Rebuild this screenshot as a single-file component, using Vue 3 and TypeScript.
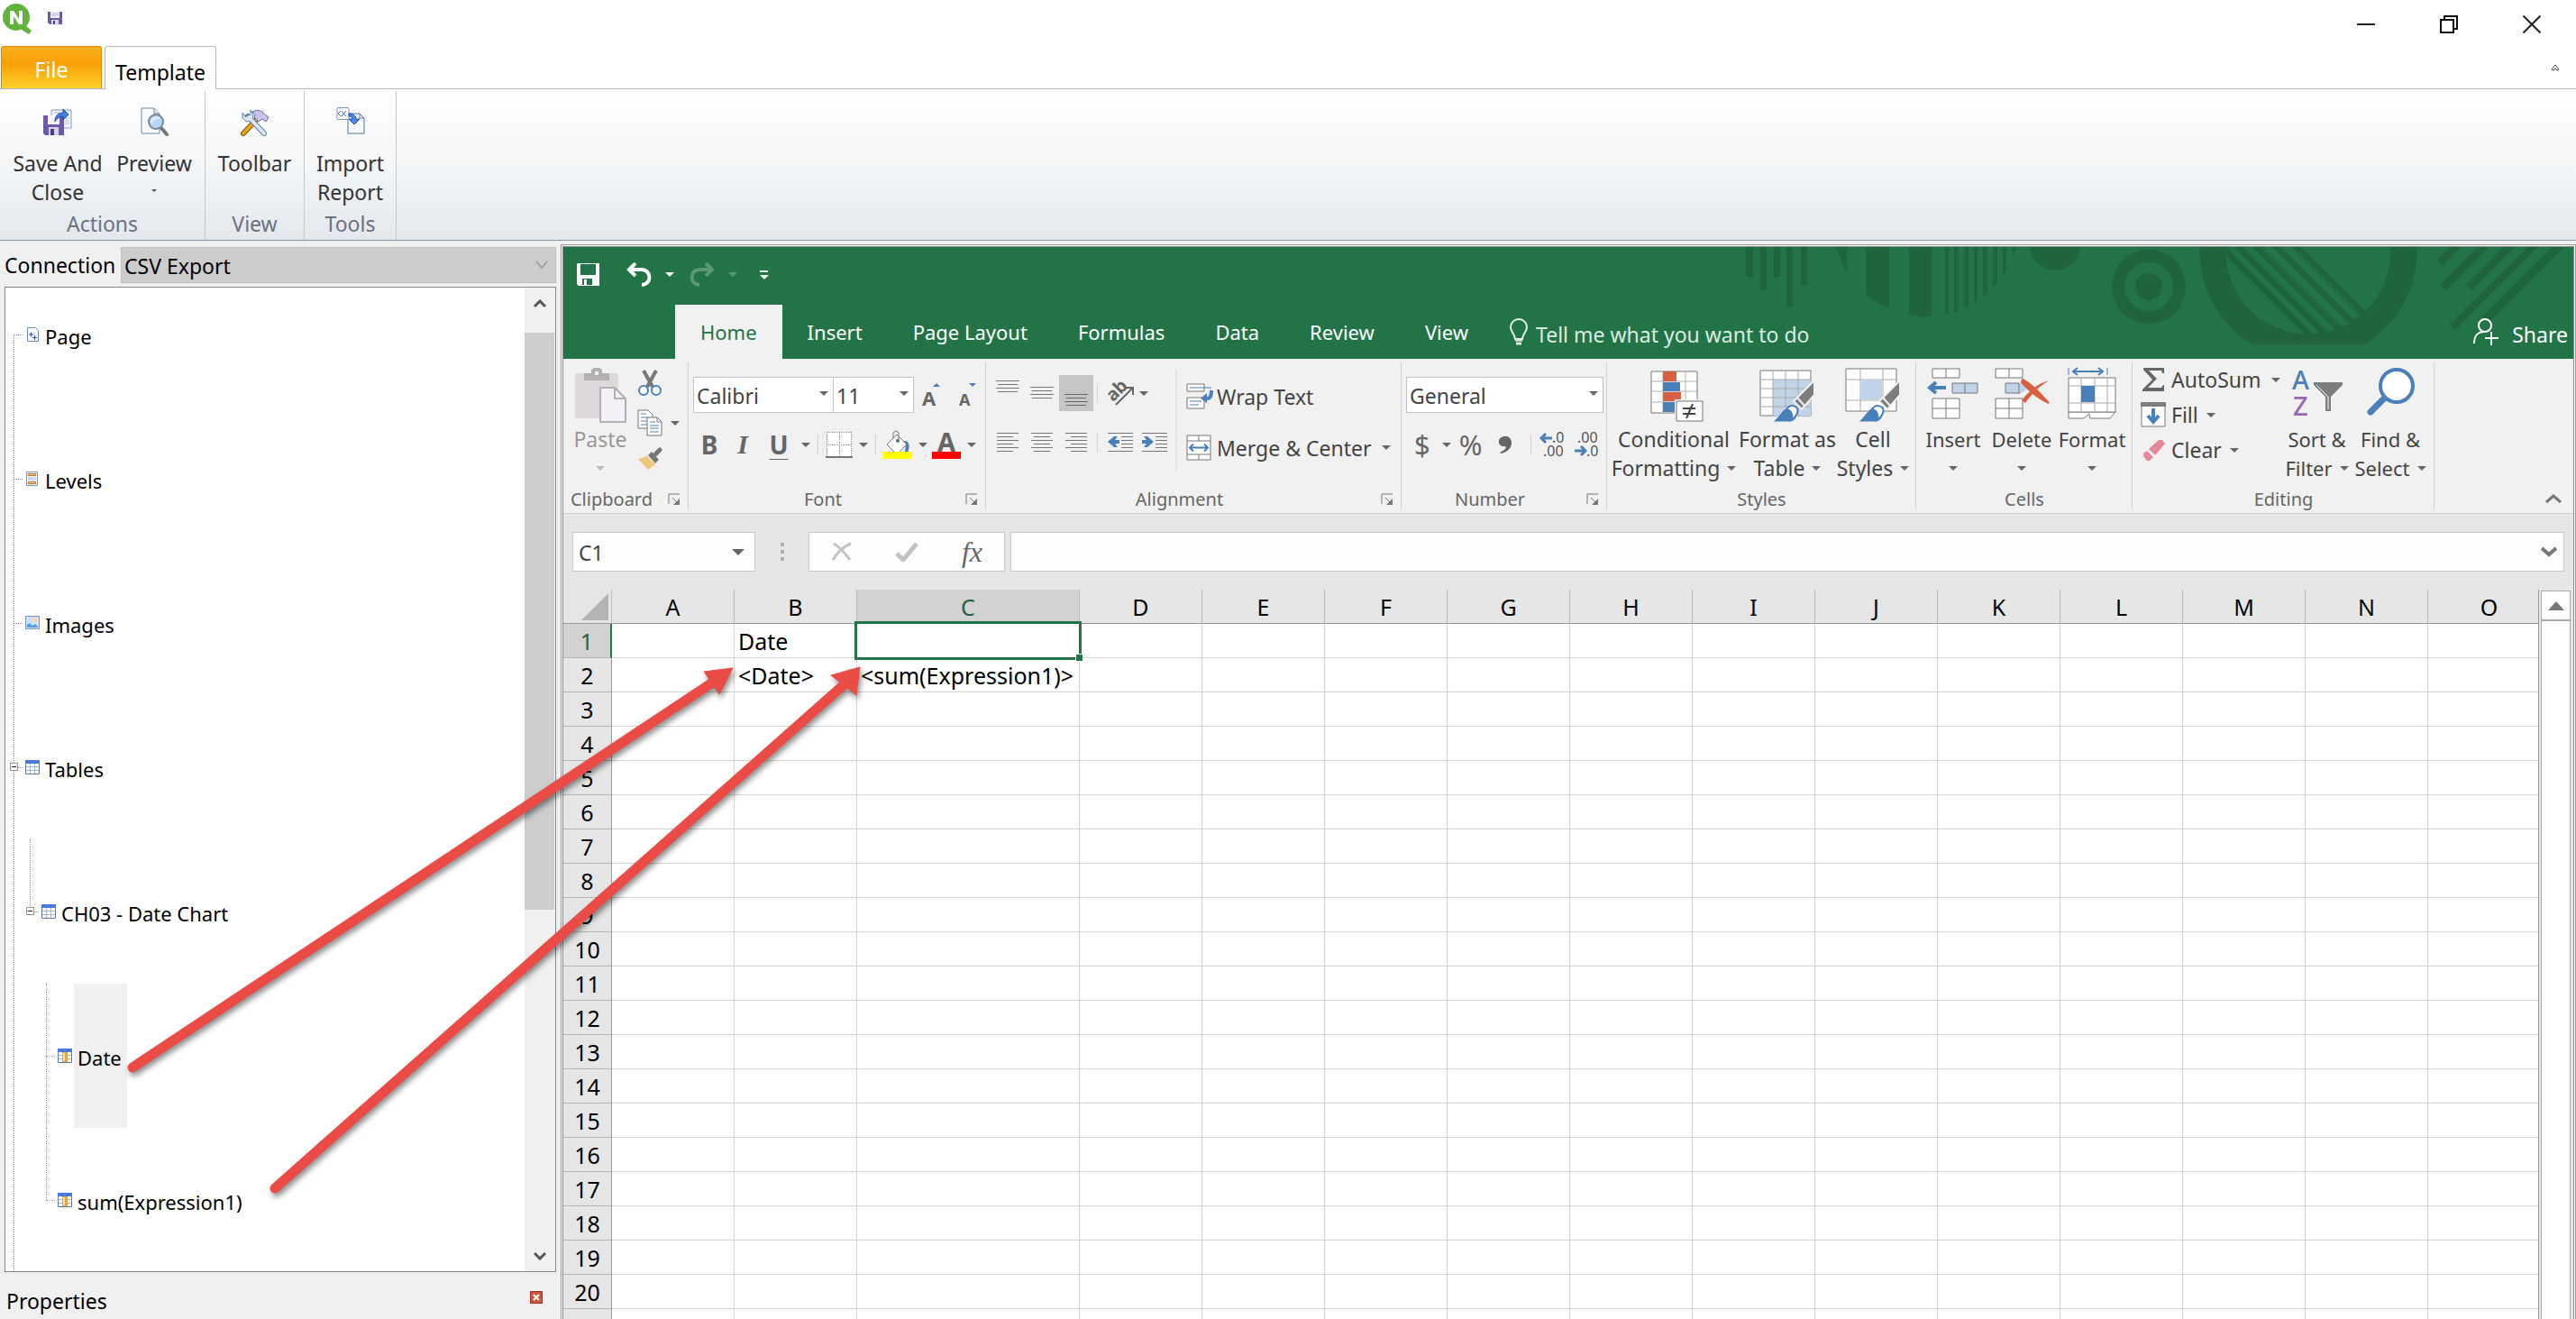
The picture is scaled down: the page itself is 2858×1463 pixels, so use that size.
<script setup lang="ts">
import { ref } from 'vue'

interface TreeNode {
  label: string
  icon: 'page' | 'levels' | 'image' | 'table' | 'column'
  depth: number
  open?: boolean
  selected?: boolean
  line?: 'full' | 'half'
}

const nodes: TreeNode[] = [
  { label: 'Page', icon: 'page', depth: 0 },
  { label: 'Levels', icon: 'levels', depth: 0 },
  { label: 'Images', icon: 'image', depth: 0 },
  { label: 'Tables', icon: 'table', depth: 0, open: true },
  { label: 'CH03 - Date Chart', icon: 'table', depth: 1, open: true, line: 'half' },
  { label: 'Date', icon: 'column', depth: 2, selected: true, line: 'full' },
  { label: 'sum(Expression1)', icon: 'column', depth: 2, line: 'half' },
]

const tabs = ['Home', 'Insert', 'Page Layout', 'Formulas', 'Data', 'Review', 'View']
const columns = 'ABCDEFGHIJKLMNO'.split('')
const rowCount = 21
const activeColumn = 'C'
const activeRow = 1

const cells: Record<string, string> = {
  B1: 'Date',
  B2: '<Date>',
  C2: '<sum(Expression1)>',
}

const formula = ref('')
</script>

<template>
  <div class="window">
    <header class="titlebar">
      <svg class="logo" width="34" height="34" viewBox="0 0 34 34" aria-hidden="true">
        <path d="M26 24l7 6-3 4-8-5z" fill="#61b33c" />
        <circle cx="16" cy="15" r="15" fill="#61b33c" />
        <path d="M9 23V8h4l6 9V8h4v15h-4l-6-9v9z" fill="#fff" />
      </svg>
      <button class="plain" aria-label="Save">
        <svg width="16" height="16" viewBox="0 0 16 16">
          <path d="M0 1h16v14H2l-2-2z" fill="#6a5aa8" />
          <path d="M3 1h10v7H3z" fill="#f4f4fb" />
          <path d="M4 3h8M4 5h8" stroke="#b8b8c8" />
          <path d="M4 10h8v5H4z" fill="#ddd9ee" />
          <path d="M6 11h2v4H6z" fill="#4b3c8c" />
        </svg>
      </button>
      <div class="window-buttons">
        <button class="plain" aria-label="Minimize">
          <svg width="20" height="20" viewBox="0 0 20 20"><path d="M0 10h20" stroke="#222" stroke-width="2" /></svg>
        </button>
        <button class="plain" aria-label="Restore">
          <svg width="20" height="20" viewBox="0 0 20 20" fill="none" stroke="#111" stroke-width="2"><path d="M1 5h14v14H1zM5 5V1h14v14h-4" /></svg>
        </button>
        <button class="plain" aria-label="Close">
          <svg width="20" height="20" viewBox="0 0 20 20"><path d="M0.500 0.500l19 19M19.500 0.500l-19 19" stroke="#222" stroke-width="2" /></svg>
        </button>
      </div>
    </header>

    <nav class="app-tabs">
      <button class="file-tab">File</button>
      <button class="template-tab">Template</button>
      <button class="plain minimize-ribbon" aria-label="Minimize ribbon">
        <svg width="10" height="8" viewBox="0 0 10 8"><path d="M1 6l4-5 4 5-2 1-2-2-2 2z" fill="#fff" stroke="#444" /></svg>
      </button>
    </nav>

    <section class="app-ribbon">
      <div class="app-group actions">
        <div class="app-buttons">
          <button class="app-button save">
            <svg width="32" height="32" viewBox="0 0 32 32">
              <path d="M9 3h22v20H9z" fill="#f3f7fd" stroke="#7f9dc6" />
              <path d="M24 12h5M24 15h5M24 18h5M12 6h6" stroke="#a9b9d3" />
              <path d="M0 9h23v22H2l-2-2z" fill="#6c5aae" />
              <path d="M5 9h13v10H5z" fill="#f6f6fc" />
              <path d="M6 22h11v9H6z" fill="#d7d2ea" />
              <path d="M8 24h4v7H8z" fill="#4c3b8f" />
              <path d="M13 16c0-7 4-10 9-10V2l6 6-6 6v-4c-4 0-6 2-9 6z" fill="#3f7fe0" stroke="#1e4fa8" />
            </svg>
            <span>Save And<br>Close</span>
          </button>
          <button class="app-button preview">
            <svg width="32" height="32" viewBox="0 0 32 32">
              <path d="M2 1h14l6 6v22H2z" fill="#fafcff" stroke="#6d88ae" />
              <path d="M16 1v6h6" fill="#dfe8f5" stroke="#6d88ae" />
              <path d="M24 23l6 7" stroke="#777" stroke-width="4" stroke-linecap="round" />
              <circle cx="18" cy="16" r="8" fill="#b9d6f5" stroke="#7c8796" stroke-width="2" />
              <path d="M13 17c0-4 4-6 9-5" fill="none" stroke="#eaf4ff" stroke-width="2" />
            </svg>
            <span>Preview<br><i class="tiny-caret"></i></span>
          </button>
        </div>
        <p>Actions</p>
      </div>
      <div class="app-group view">
        <div class="app-buttons">
          <button class="app-button wide">
            <svg width="32" height="32" viewBox="0 0 32 32">
              <path d="M3 29L19 12" stroke="#8a5a08" stroke-width="6" stroke-linecap="round" />
              <path d="M3 29L19 12" stroke="#e8a31c" stroke-width="4" stroke-linecap="round" />
              <path d="M13 5c5-3 10-1 12 1 2 2 3 3 6 5l-3 5-4-3-4 3-5-5c2-3 1-4-2-6z" fill="#c9c4ec" stroke="#6d66a8" />
              <path d="M8 10L26 29" stroke="#6080a8" stroke-width="6" stroke-linecap="round" />
              <path d="M2 6v6l5 4 6-2 1-6-3-5v5l-3 3-3-1z" fill="#dbe8f8" stroke="#6080a8" />
              <path d="M9 11L26 29" stroke="#dbe8f8" stroke-width="4" stroke-linecap="round" />
            </svg>
            <span>Toolbar<br>&nbsp;</span>
          </button>
        </div>
        <p>View</p>
      </div>
      <div class="app-group tools">
        <div class="app-buttons">
          <button class="app-button wide">
            <svg width="32" height="32" viewBox="0 0 32 32">
              <path d="M13 7h13l5 5v17H13z" fill="#f6faff" stroke="#56749f" />
              <path d="M26 7v5h5" fill="none" stroke="#56749f" />
              <rect x="1" y="0.500" width="13" height="13" rx="1" fill="#fff" stroke="#7a97c9" />
              <path d="M5 4L2 7l3 3M6 4l5 6M11 4L6 10" fill="none" stroke="#3d68c4" />
              <path d="M14 7c6 0 8 3 8 6h4l-6 6-6-6h4c0-2-1-3-4-3z" fill="#4d86e8" stroke="#2554ae" />
            </svg>
            <span>Import<br>Report</span>
          </button>
        </div>
        <p>Tools</p>
      </div>
    </section>

    <main class="workspace">
      <aside class="side">
        <div class="connection">
          <label for="connection">Connection</label>
          <div class="connection-box">
            <select id="connection"><option>CSV Export</option></select>
            <svg width="14" height="10" viewBox="0 0 14 10"><path d="M1 1l6 7 6-7" fill="none" stroke="#a5a5a5" stroke-width="2" /></svg>
          </div>
        </div>

        <div class="tree-box">
          <ul class="tree">
            <li v-for="node in nodes" :key="node.label" :class="['node', 'depth-' + node.depth]">
              <span v-if="node.line" :class="['branch', node.line]"></span>
              <span class="stub"></span>
              <button v-if="node.open" class="expander" :aria-label="'Collapse ' + node.label"></button>
              <svg width="16" height="16" viewBox="0 0 16 16" aria-hidden="true">
                <template v-if="node.icon === 'page'">
                  <path d="M2.500 0.500h9l3 3v12h-12z" fill="#fafcff" stroke="#6f8bb5" />
                  <path d="M4 8h5M6.500 5.500v5M8 11.500h5M10.500 9v5" stroke="#2e4fa8" />
                </template>
                <template v-else-if="node.icon === 'levels'">
                  <path d="M1.500 0.500h12v15h-12z" fill="#f3f7fc" stroke="#7b91b0" />
                  <path d="M3.500 2.500h8v2h-8zM3.500 11.500h8v2h-8z" fill="#fcd9a4" stroke="#c9650c" />
                  <path d="M3 7h9M3 9h9" stroke="#a8bcd6" />
                </template>
                <template v-else-if="node.icon === 'image'">
                  <path d="M0.500 0.500h15v14h-15z" fill="#c9e4fb" stroke="#7b93b8" />
                  <circle cx="10.500" cy="4.500" r="2.500" fill="#fbd3ae" />
                  <path d="M2 13V10l3-2 3 3 3-2 3 3v1z" fill="#5e97dd" />
                </template>
                <template v-else>
                  <path d="M0.500 0.500h15v15h-15z" fill="#f7faff" stroke="#60799f" />
                  <path d="M0 0h16v4H0z" fill="#4a7bd8" />
                  <path d="M5.500 4v11M10.500 4v11M1 7.500h14M1 11.500h14" stroke="#a9b8cf" />
                  <path v-if="node.icon === 'column'" d="M5 4h6v11H5z" fill="#e3a63c" />
                  <path v-if="node.icon === 'column'" d="M6 5h2v9H6z" fill="#fbe3ae" />
                </template>
              </svg>
              <span :class="['node-label', { selected: node.selected }]">{{ node.label }}</span>
            </li>
          </ul>
          <div class="tree-scroll">
            <svg width="14" height="10" viewBox="0 0 14 10"><path d="M1 8l6-6 6 6" fill="none" stroke="#555" stroke-width="3" /></svg>
            <div class="tree-thumb"></div>
            <svg width="14" height="10" viewBox="0 0 14 10"><path d="M1 2l6 6 6-6" fill="none" stroke="#555" stroke-width="3" /></svg>
          </div>
        </div>

        <div class="properties">
          <span>Properties</span>
          <button class="plain" aria-label="Close properties">
            <svg width="14" height="14" viewBox="0 0 14 14">
              <path d="M0.500 0.500h13v13h-13z" fill="#d2543f" stroke="#8f3426" />
              <path d="M4 4l6 6M10 4l-6 6" stroke="#fff" stroke-width="2" />
            </svg>
          </button>
        </div>
      </aside>

      <div class="host">
        <div class="excel">
          <div class="excel-head">
            <svg class="pattern" width="925" height="108" viewBox="0 0 925 108" aria-hidden="true">
              <defs>
                <clipPath id="disc"><circle cx="207" cy="-26" r="103" /></clipPath>
                <clipPath id="bowl"><circle cx="632" cy="5" r="93" /></clipPath>
              </defs>
              <g fill="#1f643d">
                <path d="M7 0h8v33H7zM23 0h7v48h-7zM38 0h7v33h-7zM52 0h7v66h-7zM68 0h7v42h-7z" />
                <path clip-path="url(#disc)" d="M100 0h19v90h-19zM140 0h26v90h-26zM188 0h25v90h-25zM228 0h4v90h-4zM238 0h5v90h-5zM249 0h5v90h-5zM260 0h4v90h-4zM270 0h5v90h-5zM281 0h5v90h-5zM292 0h4v90h-4zM303 0h5v90h-5z" />
                <circle cx="350" cy="-2" r="28" />
                <circle cx="454" cy="44" r="15" />
              </g>
              <g fill="none" stroke="#1f643d">
                <circle cx="454" cy="44" r="34" stroke-width="14" />
                <circle cx="631" cy="5" r="106" stroke-width="29" />
                <g clip-path="url(#bowl)" stroke-width="7">
                  <path d="M515 -20l120 120M533 -20l120 120M554 -20l120 120M576 -20l120 120M598 -20l120 120" />
                </g>
                <path d="M797 -3l-20 20M828 -3l-48 48M857 -3l-48 48M884 -4l-93 93M911 -3l-84 84" stroke-width="9" />
              </g>
            </svg>

            <div class="quick">
              <button class="plain" aria-label="Save workbook">
                <svg width="26" height="26" viewBox="0 0 26 26"><path fill-rule="evenodd" d="M1 0h24v25H2l-2-2V1zM4 1v12h17V1zM6 17v7h2v-6h3v6h6v-7z" fill="#fff" /></svg>
              </button>
              <button class="plain undo" aria-label="Undo">
                <svg width="28" height="28" viewBox="0 0 28 28"><path d="M10 1L3 8l7 7M4 8h13a8 8 0 0 1 0 17" fill="none" stroke="#fff" stroke-width="4" /></svg>
                <i class="caret light"></i>
              </button>
              <button class="plain redo" aria-label="Redo">
                <svg width="28" height="28" viewBox="0 0 28 28"><path d="M18 1l7 7-7 7M24 8H11a8 8 0 0 0 0 17" fill="none" stroke="#fff" stroke-width="4" /></svg>
                <i class="caret light"></i>
              </button>
              <button class="plain customize" aria-label="Customize toolbar"><i class="caret light"></i></button>
            </div>

            <nav class="excel-tabs">
              <button v-for="(tab, i) in tabs" :key="tab" :class="['excel-tab', { current: i === 0 }]">{{ tab }}</button>
              <button class="tell-me">
                <svg width="20" height="30" viewBox="0 0 20 30" fill="none" stroke="#e7f1eb" stroke-width="2">
                  <path d="M6 23c0-5-5-8-5-13a9 9 0 0 1 18 0c0 5-5 8-5 13z" />
                  <path d="M6 24h8M7 28h6" stroke-width="3" />
                </svg>
                <span>Tell me what you want to do</span>
              </button>
              <button class="share">
                <svg width="30" height="32" viewBox="0 0 30 32" fill="none" stroke="#fff" stroke-width="2">
                  <circle cx="13" cy="9" r="7" />
                  <path d="M1 29c0-8 4-13 11-13M13 23h15M20 16v15" />
                </svg>
                <span>Share</span>
              </button>
            </nav>
          </div>

          <div class="ribbon">
            <section class="group clipboard">
              <div class="body">
                <button class="big paste">
                  <svg width="60" height="60" viewBox="0 0 60 60">
                    <rect x="2" y="6" width="48" height="50" rx="2" fill="#dcd8dc" />
                    <path d="M12 6h8V2l3-2h6l3 2v4h8v8H12z" fill="#b3b0b3" /><path d="M24 4h4v4h-4z" fill="#f1f1f1" />
                    <path d="M30 22h16l12 12v26H30z" fill="#f5f0f7" stroke="#b3b0b3" stroke-width="2" /><path d="M46 22v12h12" fill="none" stroke="#b3b0b3" stroke-width="2" />
                  </svg>
                  <span>Paste</span><span class="drop"><i class="caret"></i></span>
                </button>
                <div class="stack">
                  <button class="plain" aria-label="Cut">
                    <svg width="28" height="30" viewBox="0 0 28 30">
                      <path d="M7 1l10 18M21 1L11 19" stroke="#777" stroke-width="4" />
                      <circle cx="7" cy="23" r="5" fill="#fff" stroke="#4a80ba" stroke-width="2" /><circle cx="21" cy="23" r="5" fill="#fff" stroke="#4a80ba" stroke-width="2" />
                    </svg>
                  </button>
                  <button class="plain" aria-label="Copy">
                    <svg width="28" height="30" viewBox="0 0 28 30">
                      <path d="M1 1h11l5 5v15H1z" fill="#fff" stroke="#777" /><path d="M4 5h6M4 9h9M4 13h9M4 17h9" stroke="#4a80ba" />
                      <path d="M11 9h11l5 5v15H11z" fill="#fff" stroke="#777" /><path d="M22 9v5h5" fill="none" stroke="#777" /><path d="M14 14h6M14 18h10M14 21h10M14 25h10" stroke="#4a80ba" />
                    </svg>
                    <i class="caret"></i>
                  </button>
                  <button class="plain" aria-label="Format painter">
                    <svg width="28" height="24" viewBox="0 0 28 24">
                      <path d="M1 11l10-3 9 9-8 6z" fill="#edc87e" /><path d="M12 7l4-4 8 9-4 4z" fill="#777" /><path d="M18 8l7-7" stroke="#777" stroke-width="5" stroke-linecap="round" />
                    </svg>
                  </button>
                </div>
              </div>
              <footer><span>Clipboard</span><svg class="launcher" width="14" height="14" viewBox="0 0 14 14"><path d="M1 12V1h12M5 5l6 6" fill="none" stroke="#777" /><path d="M13 6v7H6z" fill="#777" /></svg></footer>
            </section>

            <section class="group font">
              <div class="body rows">
                <div class="row">
                  <div class="picker face"><select aria-label="Font"><option>Calibri</option></select><i class="caret"></i></div>
                  <div class="picker size"><select aria-label="Font size"><option>11</option></select><i class="caret"></i></div>
                  <button class="plain grow" aria-label="Increase font size">
                    <svg width="22" height="28" viewBox="0 0 22 28"><text x="0" y="26" class="bold" font-size="22" fill="#666">A</text><path d="M12 5l4-4 4 4z" fill="#4a80ba" /></svg>
                  </button>
                  <button class="plain shrink" aria-label="Decrease font size">
                    <svg width="22" height="28" viewBox="0 0 22 28"><text x="1" y="26" class="bold" font-size="18" fill="#666">A</text><path d="M12 1h8l-4 4z" fill="#4a80ba" /></svg>
                  </button>
                </div>
                <div class="row second">
                  <button class="plain letter">B</button>
                  <button class="plain letter italic">I</button>
                  <button class="plain letter underline">U</button>
                  <i class="caret"></i>
                  <i class="bar"></i>
                  <button class="plain" aria-label="Borders">
                    <svg width="30" height="30" viewBox="0 0 30 30"><path d="M1 1h28v28H1z" fill="#fff" /><path d="M1 1.500h28M1 15.500h28M1.500 1v28M15.500 1v28M28.500 1v28" stroke="#888" stroke-dasharray="1 1" /><path d="M0 29h30" stroke="#777" stroke-width="2" /></svg>
                  </button>
                  <i class="caret"></i>
                  <i class="bar"></i>
                  <button class="plain" aria-label="Fill color">
                    <svg width="32" height="32" viewBox="0 0 32 32"><path d="M23 12c6 0 7 6 4 13l-4 1c2-5 2-8 0-14z" fill="#4a80ba" /><path d="M4 16L15 5l11 11-11 11z" fill="#fff" stroke="#777" /><path d="M11 9V3l3-2 3 2v8" fill="none" stroke="#777" /><circle cx="16" cy="12" r="2" fill="#666" /><path d="M0 24h32v8H0z" fill="#ff0" /></svg>
                  </button>
                  <i class="caret"></i>
                  <button class="plain font-color" aria-label="Font color">
                    <svg width="32" height="32" viewBox="0 0 32 32"><text x="6" y="24" class="bold" font-size="29" fill="#666">A</text><path d="M0 24h32v8H0z" fill="#f00" /></svg>
                  </button>
                  <i class="caret"></i>
                </div>
              </div>
              <footer><span>Font</span><svg class="launcher" width="14" height="14" viewBox="0 0 14 14"><path d="M1 12V1h12M5 5l6 6" fill="none" stroke="#777" /><path d="M13 6v7H6z" fill="#777" /></svg></footer>
            </section>

            <section class="group alignment">
              <div class="body">
                <div class="align-grid">
                  <div class="row">
                    <button class="plain square" aria-label="Top align"><svg width="28" height="38" viewBox="0 0 28 38" stroke="#777"><path d="M1 5.500h26M3 9.500h22M1 13.500h26M3 17.500h22" /></svg></button>
                    <button class="plain square" aria-label="Middle align"><svg width="28" height="38" viewBox="0 0 28 38" stroke="#777"><path d="M1 12.500h26M3 16.500h22M1 20.500h26M3 24.500h22" /></svg></button>
                    <button class="plain square pressed" aria-label="Bottom align"><svg width="28" height="38" viewBox="0 0 28 38" stroke="#666"><path d="M1 20.500h26M3 24.500h22M1 28.500h26M3 32.500h22" /></svg></button>
                    <i class="bar"></i>
                    <button class="plain orient" aria-label="Orientation">
                      <svg width="30" height="30" viewBox="0 0 30 30"><text x="2" y="22" class="bold" font-size="20" fill="#666" transform="rotate(-45 8 19)">ab</text><path d="M9 28L27 10M20 9h8v8" fill="none" stroke="#666" stroke-width="2" /></svg>
                      <i class="caret"></i>
                    </button>
                  </div>
                  <div class="row second">
                    <button class="plain square" aria-label="Align left"><svg width="28" height="24" viewBox="0 0 28 24" stroke="#777"><path d="M2 1.500h24M2 5.500h18M2 9.500h24M2 13.500h18M2 17.500h24M2 21.500h18" /></svg></button>
                    <button class="plain square" aria-label="Center"><svg width="28" height="24" viewBox="0 0 28 24" stroke="#777"><path d="M2 1.500h24M5 5.500h18M2 9.500h24M5 13.500h18M2 17.500h24M5 21.500h18" /></svg></button>
                    <button class="plain square" aria-label="Align right"><svg width="28" height="24" viewBox="0 0 28 24" stroke="#777"><path d="M2 1.500h24M8 5.500h18M2 9.500h24M8 13.500h18M2 17.500h24M8 21.500h18" /></svg></button>
                    <i class="bar"></i>
                    <button class="plain square indent" aria-label="Decrease indent"><svg width="28" height="24" viewBox="0 0 28 24"><path d="M0 1.500h28M15 5.500h13M15 9.500h13M15 13.500h13M15 17.500h13M0 21.500h28" stroke="#777" /><path d="M0 11l7-6h4l-3 4h5v4H8l3 4H7z" fill="#4a80ba" /></svg></button>
                    <button class="plain square" aria-label="Increase indent"><svg width="28" height="24" viewBox="0 0 28 24"><path d="M0 1.500h28M15 5.500h13M15 9.500h13M15 13.500h13M15 17.500h13M0 21.500h28" stroke="#777" /><path d="M13 11L6 5H2l3 4H0v4h5l-3 4h4z" fill="#4a80ba" /></svg></button>
                  </div>
                </div>
                <div class="wrap-list">
                  <button class="plain">
                    <svg width="30" height="30" viewBox="0 0 30 30"><path d="M1 2h19v8H1zM1 17h19v12H1z" fill="#fff" stroke="#777" /><path d="M4 6h24M4 21h13M4 25h10" stroke="#4a80ba" /><path d="M26 9h4c0 8-2 11-7 11v3l-7-5 7-6v4c2 0 3-2 3-7z" fill="#4a80ba" /></svg>
                    <span>Wrap Text</span>
                  </button>
                  <button class="plain">
                    <svg width="30" height="30" viewBox="0 0 30 30"><path d="M1 2h26v27H1z" fill="#fff" stroke="#777" /><path d="M1 8h26M1 23h26M14 2v6M14 23v6" stroke="#777" /><path d="M4 15.500h20M8 11.500l-4 4 4 4M20 11.500l4 4-4 4" fill="none" stroke="#4a80ba" stroke-width="2" /></svg>
                    <span>Merge &amp; Center</span>
                    <i class="caret"></i>
                  </button>
                </div>
              </div>
              <footer><span>Alignment</span><svg class="launcher" width="14" height="14" viewBox="0 0 14 14"><path d="M1 12V1h12M5 5l6 6" fill="none" stroke="#777" /><path d="M13 6v7H6z" fill="#777" /></svg></footer>
            </section>

            <section class="group number">
              <div class="body rows">
                <div class="row">
                  <div class="picker format"><select aria-label="Number format"><option>General</option></select><i class="caret"></i></div>
                </div>
                <div class="row second">
                  <button class="plain symbol dollar">$</button>
                  <i class="caret"></i>
                  <button class="plain symbol percent">%</button>
                  <button class="plain" aria-label="Comma style"><svg width="28" height="30" viewBox="0 0 28 30"><path d="M13 7c5-3 11 0 11 6 0 7-6 11-12 12l-1-1c4-2 7-4 7-7-5 1-9-2-8-6 0-2 1-3 3-4z" fill="#666" /></svg></button>
                  <i class="bar"></i>
                  <button class="plain decimals" aria-label="Increase decimal"><svg width="28" height="30" viewBox="0 0 28 30"><text x="13" y="13" font-size="16" fill="#555">.0</text><text x="3" y="28" font-size="16" fill="#555">.00</text><path d="M1 8h12M6 3L1 8l5 5" fill="none" stroke="#4a80ba" stroke-width="3" /></svg></button>
                  <button class="plain decimals" aria-label="Decrease decimal"><svg width="28" height="30" viewBox="0 0 28 30"><text x="3" y="13" font-size="16" fill="#555">.00</text><text x="13" y="28" font-size="16" fill="#555">.0</text><path d="M0 22h12M7 17l5 5-5 5" fill="none" stroke="#4a80ba" stroke-width="3" /></svg></button>
                </div>
              </div>
              <footer><span>Number</span><svg class="launcher" width="14" height="14" viewBox="0 0 14 14"><path d="M1 12V1h12M5 5l6 6" fill="none" stroke="#777" /><path d="M13 6v7H6z" fill="#777" /></svg></footer>
            </section>

            <section class="group styles">
              <div class="body">
                <button class="big conditional">
                  <svg width="60" height="60" viewBox="0 0 60 60">
                    <path d="M2 4h51v46H2z" fill="#fff" stroke="#777" /><path d="M2 15h51M2 26h51M2 38h51M15 4v46M28 4v46M40 4v46" stroke="#b0b0b0" />
                    <path d="M15 4h15v11H15zM15 27h20v10H15z" fill="#d95f41" /><path d="M15 16h19v10H15zM15 38h13v11H15z" fill="#4a80ba" />
                    <path d="M28 35h32v25H28z" fill="#f1f1f1" /><path d="M30 37h29v22H30z" fill="#fff" stroke="#777" /><path d="M37 45h14M37 51h14M48 40l-7 16" stroke="#444" stroke-width="2" />
                  </svg>
                  <span>Conditional</span><span class="drop">Formatting <i class="caret"></i></span>
                </button>
                <button class="big as-table">
                  <svg width="62" height="60" viewBox="0 0 62 60">
                    <path d="M1 3h56v50H1z" fill="#fff" stroke="#777" /><path d="M15 13h42v40H15z" fill="#c1d3e8" /><path d="M1 13h56M1 23h56M1 33h56M1 43h56M15 3v50M29 3v50M43 3v50" stroke="#aaa" />
                    <path d="M61 14v16L47 46l-9-9z" fill="#7d7d7d" stroke="#f1f1f1" stroke-width="2" /><path d="M42 33l8 9" stroke="#f1f1f1" stroke-width="2" />
                    <path d="M15 60c8-7 11-17 20-17 9 1 10 15-1 17z" fill="#4a80ba" stroke="#f1f1f1" /><path d="M30 46c4-6 10-4 12-1 2 5-3 11-7 13 3-6 0-11-5-12z" fill="#fff" stroke="#4a80ba" stroke-width="2" />
                  </svg>
                  <span>Format as</span><span class="drop">Table <i class="caret"></i></span>
                </button>
                <button class="big cell-styles">
                  <svg width="62" height="60" viewBox="0 0 62 60">
                    <path d="M1 1h56v47H1z" fill="#fff" stroke="#777" /><path d="M1 13h56M1 36h56M17 1v47M42 1v47" stroke="#aaa" /><path d="M17 14h24v21H17z" fill="#c1d3e8" />
                    <path d="M61 14v16L47 46l-9-9z" fill="#7d7d7d" stroke="#f1f1f1" stroke-width="2" /><path d="M42 33l8 9" stroke="#f1f1f1" stroke-width="2" />
                    <path d="M15 60c8-7 11-17 20-17 9 1 10 15-1 17z" fill="#4a80ba" stroke="#f1f1f1" /><path d="M30 46c4-6 10-4 12-1 2 5-3 11-7 13 3-6 0-11-5-12z" fill="#fff" stroke="#4a80ba" stroke-width="2" />
                  </svg>
                  <span>Cell</span><span class="drop">Styles <i class="caret"></i></span>
                </button>
              </div>
              <footer><span>Styles</span></footer>
            </section>

            <section class="group cells">
              <div class="body">
                <button class="big insert">
                  <svg width="58" height="60" viewBox="0 0 58 60">
                    <path d="M6 1h30v10H6zM6 34h30v22H6z" fill="#fff" stroke="#777" /><path d="M21 1v10M21 34v22M6 45h30" stroke="#777" /><path d="M28 17h28v11H28z" fill="#c1d3e8" stroke="#777" /><path d="M42 17v11" stroke="#777" /><path d="M3 22h18M10 16l-7 6 7 6" fill="none" stroke="#4a80ba" stroke-width="4" />
                  </svg>
                  <span>Insert</span><span class="drop"><i class="caret"></i></span>
                </button>
                <button class="big delete">
                  <svg width="62" height="60" viewBox="0 0 62 60">
                    <path d="M2 1h30v10H2zM2 34h30v22H2z" fill="#fff" stroke="#777" /><path d="M17 1v10M17 34v22M2 45h30" stroke="#777" /><path d="M13 17h18l8 5-8 6H13z" fill="#c1d3e8" /><path d="M28 17H13v11h16M28 17v11" fill="none" stroke="#777" /><path d="M32 13c10 5 18 14 29 26C50 34 40 26 31 16z" fill="#d95f41" stroke="#d95f41" stroke-width="2" /><path d="M61 14C48 18 40 25 31 36l4 3c8-11 15-18 26-25z" fill="#d95f41" />
                  </svg>
                  <span>Delete</span><span class="drop"><i class="caret"></i></span>
                </button>
                <button class="big format-cells">
                  <svg width="56" height="60" viewBox="0 0 56 60">
                    <path d="M2 49h52l-6 7H26l-1-5-6 5H2z" fill="#fff" stroke="#777" /><path d="M2 11h52v38H2z" fill="#fff" stroke="#777" /><path d="M2 20h52M2 39h52M16 11v38M31 11v38M45 11v38" stroke="#aaa" /><path d="M16 20h15v18H16z" fill="#4a80ba" /><path d="M2 0v8M45 0v8" stroke="#4a80ba" /><path d="M7 4h33M12 0L7 4l5 4M35 0l5 4-5 4" fill="none" stroke="#4a80ba" stroke-width="2" />
                  </svg>
                  <span>Format</span><span class="drop"><i class="caret"></i></span>
                </button>
              </div>
              <footer><span>Cells</span></footer>
            </section>

            <section class="group editing">
              <div class="body">
                <div class="edit-list">
                  <button class="plain autosum">
                    <svg width="28" height="28" viewBox="0 0 28 28"><path d="M3 1h23v6h-2l-1-3H9l9 9L8 23h15l2-3h1v7H2v-2l11-11L3 3z" fill="#666" /></svg>
                    <span>AutoSum</span><i class="caret"></i>
                  </button>
                  <button class="plain">
                    <svg width="28" height="28" viewBox="0 0 28 28"><path d="M1 1h26v26H1z" fill="#fff" stroke="#777" /><path d="M0 0h28v5H0z" fill="#7d7d7d" /><path d="M14 7v14M8 15l6 7 6-7" fill="none" stroke="#4a80ba" stroke-width="4" /></svg>
                    <span>Fill</span><i class="caret"></i>
                  </button>
                  <button class="plain">
                    <svg width="28" height="28" viewBox="0 0 28 28"><path d="M9 13L20 3h4l3 4-11 13z" fill="#e6879b" /><path d="M7 15l7 7-4 4h-3l-4-5v-3z" fill="#e6879b" /></svg>
                    <span>Clear</span><i class="caret"></i>
                  </button>
                </div>
                <button class="big sort">
                  <svg width="58" height="60" viewBox="0 0 58 60"><text x="1" y="24" class="medium" font-size="29" fill="#4a80ba">A</text><text x="2" y="53" class="medium" font-size="29" fill="#9a68b8">Z</text><path d="M25 16h32v3L44 32v16h-6V32L25 19z" fill="#7d7d7d" /><path d="M28 19l13 13v14" fill="none" stroke="#fff" /></svg>
                  <span>Sort &amp;</span><span class="drop">Filter <i class="caret"></i></span>
                </button>
                <button class="big find">
                  <svg width="58" height="60" viewBox="0 0 58 60"><path d="M23 33L7 49" stroke="#4a80ba" stroke-width="7" stroke-linecap="round" /><circle cx="36" cy="20" r="18" fill="#fff" stroke="#4a80ba" stroke-width="4" /></svg>
                  <span>Find &amp;</span><span class="drop">Select <i class="caret"></i></span>
                </button>
              </div>
              <footer><span>Editing</span></footer>
            </section>
            <button class="plain collapse" aria-label="Collapse ribbon">
              <svg width="18" height="12" viewBox="0 0 18 12"><path d="M1 10l8-7 8 7" fill="none" stroke="#777" stroke-width="3" /></svg>
            </button>
          </div>

          <div class="formula-bar">
            <div class="name-box">
              <input aria-label="Name box" value="C1">
              <i class="caret large"></i>
            </div>
            <div class="grip"><i></i><i></i><i></i></div>
            <div class="formula-tools">
              <button class="plain" aria-label="Cancel"><svg width="24" height="22" viewBox="0 0 24 22"><path d="M3 2c6 3 12 10 18 18M22 2C14 5 7 12 2 20" fill="none" stroke="#c3c3c3" stroke-width="3" /></svg></button>
              <button class="plain" aria-label="Enter"><svg width="26" height="22" viewBox="0 0 26 22"><path d="M2 13l7 7L24 2" fill="none" stroke="#c3c3c3" stroke-width="5" /></svg></button>
              <button class="plain fx">fx</button>
            </div>
            <div class="formula-field">
              <input v-model="formula" aria-label="Formula">
              <svg width="18" height="12" viewBox="0 0 18 12"><path d="M1 2l8 7 8-7" fill="none" stroke="#777" stroke-width="4" /></svg>
            </div>
          </div>

          <div class="sheet-area">
            <div class="sheet">
              <table>
                <colgroup>
                  <col class="row-head-col">
                  <col v-for="c in columns" :key="c" :class="c === 'C' ? 'wide-col' : 'col'">
                </colgroup>
                <thead>
                  <tr>
                    <td class="corner"><svg width="30" height="30" viewBox="0 0 30 30"><path d="M30 0v30H0z" fill="#b4b4b4" /></svg></td>
                    <th v-for="c in columns" :key="c" scope="col" :class="{ active: c === activeColumn }">{{ c }}</th>
                  </tr>
                </thead>
                <tbody>
                  <tr v-for="r in rowCount" :key="r">
                    <th scope="row" :class="{ active: r === activeRow }">{{ r }}</th>
                    <td v-for="c in columns" :key="c">
                      {{ cells[c + r] }}
                      <div v-if="c === activeColumn && r === activeRow" class="selection"><i></i></div>
                    </td>
                  </tr>
                </tbody>
              </table>
            </div>
            <div class="sheet-scroll">
              <button class="scroll-up" aria-label="Scroll up"><svg width="18" height="10" viewBox="0 0 18 10"><path d="M9 0l9 10H0z" fill="#777" /></svg></button>
              <div class="sheet-thumb"></div>
            </div>
          </div>
        </div>
      </div>
    </main>

    <svg class="arrows" aria-hidden="true">
      <g fill="#ea4b44" stroke="#ea4b44">
        <path d="M147 1184L792 756M305 1318L939 757" stroke-width="11" stroke-linecap="round" />
        <path d="M813 741l-32 4 17 25zM954 740l-32 9 28 22z" />
      </g>
    </svg>
  </div>
</template>

<style>
html,
body {
  margin: 0;
  background: #fff;
}
</style>

<style scoped>
.window {
  position: relative;
  display: flex;
  flex-direction: column;
  height: 100vh;
  overflow: hidden;
  font: 23px/32px "Noto Sans", "Open Sans", sans-serif;
  color: #000;
  background: #fff;
}
*,
*::before,
*::after {
  box-sizing: border-box;
}
button,
select,
input {
  font: inherit;
  color: inherit;
  margin: 0;
}
button {
  padding: 0;
  border: 0;
  background: none;
  white-space: nowrap;
}
svg {
  display: block;
  flex: none;
}
.group svg {
  overflow: visible;
}
.plain {
  display: flex;
  align-items: center;
}
.bold {
  font-weight: 700;
}
.medium {
  font-weight: 500;
}

/* Title bar and application ribbon */
.titlebar {
  display: flex;
  align-items: flex-start;
  height: 51px;
  padding: 4px 22px 0 2px;
}
.titlebar > .plain {
  margin: 8px 0 0 17px;
}
.window-buttons {
  display: flex;
  gap: 72px;
  margin: 13px 17px 0 auto;
}
.app-tabs {
  display: flex;
  align-items: stretch;
  height: 48px;
  padding-left: 1px;
  border-bottom: 1px solid #b6b8c2;
}
.file-tab {
  width: 112px;
  padding-top: 3px;
  color: #fff;
  border: 1px solid #d9861b;
  border-bottom: 0;
  border-radius: 3px 3px 0 0;
  background: linear-gradient(#fbb01f, #fb9f06 40%, #fdd22c);
}
.template-tab {
  width: 124px;
  height: 48px;
  margin-left: 3px;
  padding-top: 9px;
  border: 1px solid #b6b8c2;
  border-bottom: 0;
  border-radius: 3px 3px 0 0;
  background: #fff;
}
.minimize-ribbon {
  margin: 0 18px 0 auto;
}
.app-ribbon {
  display: flex;
  flex: none;
  height: 168px;
  padding-top: 2px;
  border-bottom: 1px solid #8a929c;
  background: linear-gradient(#fff, #f4f6f8 50%, #e4e8ed);
}
.app-group {
  display: flex;
  flex-direction: column;
  padding-top: 18px;
  border-right: 1px solid #c3c8ce;
}
.actions {
  width: 228px;
}
.actions .app-buttons {
  padding-left: 6px;
}
.view {
  width: 110px;
}
.tools {
  width: 102px;
}
.app-buttons {
  display: flex;
  height: 113px;
}
.app-button {
  display: flex;
  flex-direction: column;
  align-items: center;
  gap: 14px;
  color: #333;
}
.save {
  width: 116px;
}
.preview {
  width: 98px;
}
.wide {
  width: 100%;
}
.app-group p {
  margin: 0;
  text-align: center;
  color: #6b7280;
}
.tiny-caret {
  display: block;
  width: 6px;
  margin: 13px auto 0;
  border: 3px solid transparent;
  border-top-color: #555;
  border-bottom: 0;
}

/* Side panel */
.workspace {
  display: flex;
  flex: 1;
  min-height: 0;
  padding-top: 4px;
  background: #f0f0f0;
}
.side {
  display: flex;
  flex-direction: column;
  flex: none;
  width: 622px;
  padding: 3px 5px 0;
}
.connection {
  display: flex;
  align-items: center;
  justify-content: space-between;
  height: 40px;
  margin-bottom: 4px;
}
.connection-box {
  position: relative;
  width: 483px;
}
.connection-box select {
  display: block;
  width: 100%;
  height: 40px;
  padding: 2px 3px 0;
  border: 1px solid #bdbdbd;
  border-radius: 0;
  background: #ccc;
  appearance: none;
}
.connection-box svg {
  position: absolute;
  right: 9px;
  top: 15px;
}
.tree-box {
  display: flex;
  flex: 1;
  min-height: 0;
  overflow: hidden;
  border: 1px solid #828790;
  background: #fff;
}
.tree {
  position: relative;
  flex: 1;
  margin: -28px 0 0;
  padding: 0;
  list-style: none;
  font-size: 22px;
}
.tree::before {
  content: "";
  position: absolute;
  left: 9px;
  top: 80px;
  bottom: 0;
  border-left: 1px dotted #999;
}
.node {
  position: relative;
  display: flex;
  align-items: center;
  height: 160px;
  padding-left: 9px;
}
.depth-1 {
  margin-left: 18px;
}
.depth-2 {
  margin-left: 36px;
}
.branch {
  position: absolute;
  left: 9px;
  top: 0;
  border-left: 1px dotted #999;
}
.branch.full {
  height: 160px;
}
.branch.half {
  height: 80px;
}
.stub {
  width: 10px;
  margin-right: 3px;
  border-top: 1px dotted #999;
}
.expander {
  position: absolute;
  left: 5px;
  top: 75px;
  width: 9px;
  height: 9px;
  border: 1px solid #999;
  background: linear-gradient(#222, #222) center / 5px 1px no-repeat #fff;
}
.node-label {
  display: flex;
  align-items: center;
  height: 160px;
  margin-left: 2px;
  padding: 3px 6px 0 4px;
}
.node-label.selected {
  background: #f0f0f0;
}
.tree-scroll {
  display: flex;
  flex-direction: column;
  align-items: center;
  width: 34px;
  padding: 13px 1px 12px 0;
  background: #f0f0f0;
}
.tree-thumb {
  width: 33px;
  height: 60%;
  margin: 27px 0 auto;
  background: #cdcdcd;
}
.properties {
  display: flex;
  justify-content: space-between;
  align-items: flex-start;
  height: 52px;
  padding: 16px 15px 0 2px;
}
.properties .plain {
  margin-top: 5px;
}

/* Spreadsheet frame and green header */
.host {
  display: flex;
  flex: 1;
  min-width: 0;
  padding: 1px 1px 0;
  border: 1px solid #999;
  border-bottom: 0;
  background: #fff;
}
.excel {
  display: flex;
  flex-direction: column;
  flex: 1;
  min-width: 0;
  border: 1px solid #8c8c8c;
  border-bottom: 0;
  background: #e6e6e6;
}
.excel-head {
  position: relative;
  flex: none;
  height: 124px;
  color: #fff;
  background: #227447;
}
.pattern {
  position: absolute;
  right: 0;
  top: 0;
}
.quick {
  display: flex;
  align-items: center;
  height: 64px;
  padding: 0 15px 3px;
}
.undo,
.redo {
  gap: 15px;
}
.undo {
  margin-left: 29px;
}
.redo {
  margin-left: 17px;
  opacity: 0.25;
}
.customize {
  width: 9px;
  height: 10px;
  margin-left: 25px;
  border-top: 2px solid #fff;
  align-items: flex-end;
}
.caret {
  flex: none;
  display: inline-block;
  width: 10px;
  border: 5px solid transparent;
  border-top-color: #666;
  border-bottom: 0;
}
.caret.light {
  border-top-color: #fff;
}
.caret.large {
  width: 14px;
  border-width: 7px 7px 0;
}
.excel-tabs {
  position: relative;
  display: flex;
  height: 60px;
  padding-left: 124px;
}
.excel-tab {
  padding: 0 28px;
  font-size: 22px;
}
.excel-tab.current {
  color: #227447;
  background: #f1f1f1;
}
.tell-me,
.share {
  display: flex;
  align-items: center;
}
.tell-me span,
.share span {
  padding-top: 5px;
}
.tell-me {
  gap: 9px;
  margin-left: 18px;
  color: #dcebe2;
}
.share {
  gap: 13px;
  margin: 0 6px 0 auto;
}

/* Spreadsheet ribbon */
.ribbon {
  display: flex;
  flex: none;
  height: 172px;
  color: #444;
  border-bottom: 1px solid #d2d2d2;
  background: #f1f1f1;
}
.group {
  position: relative;
  display: flex;
  flex-direction: column;
  flex: none;
}
.group::after {
  content: "";
  position: absolute;
  right: 0;
  top: 4px;
  bottom: 4px;
  width: 1px;
  background: #d2d2d2;
}
.clipboard { width: 139px; }
.font { width: 330px; }
.alignment { width: 461px; }
.number { width: 228px; }
.styles { width: 343px; }
.cells { width: 240px; }
.editing { width: 335px; }
.body {
  display: flex;
  align-items: flex-start;
  height: 143px;
}
.group footer {
  position: relative;
  height: 26px;
  font-size: 20px;
  line-height: 26px;
  text-align: center;
  color: #666;
}
.clipboard footer,
.font footer,
.alignment footer,
.number footer {
  padding-right: 32px;
}
.launcher {
  position: absolute;
  right: 9px;
  top: 6px;
}
.big {
  display: flex;
  flex-direction: column;
  align-items: center;
  padding-top: 10px;
}
.big svg {
  margin-bottom: 3px;
}
.drop {
  display: flex;
  align-items: center;
  justify-content: center;
  gap: 8px;
  height: 32px;
}
.paste {
  width: 74px;
  margin-left: 4px;
  color: #999;
}
.paste .caret {
  border-top-color: #bbb;
}
.stack {
  display: flex;
  flex-direction: column;
  gap: 14px;
  padding: 12px 0 0 4px;
}
.stack .plain {
  gap: 9px;
}
.rows {
  flex-direction: column;
  padding: 20px 5px 0;
}
.row {
  display: flex;
  align-items: center;
  height: 40px;
}
.row.second {
  height: 34px;
  margin-top: 18px;
}
.picker {
  position: relative;
}
.picker select {
  display: block;
  width: 100%;
  height: 40px;
  padding: 2px 3px 0;
  border: 1px solid #c3c3c3;
  border-radius: 0;
  background: #fff;
  appearance: none;
}
.picker .caret {
  position: absolute;
  right: 6px;
  top: 16px;
}
.face { width: 156px; }
.size { width: 90px; margin-left: -1px; }
.format { width: 219px; }
.grow {
  margin-left: 9px;
}
.shrink {
  margin-left: 18px;
}
.font .second {
  padding-left: 3px;
}
.letter {
  justify-content: center;
  width: 36px;
  font-size: 28px;
  font-weight: 700;
  color: #666;
}
.letter:first-child {
  width: 30px;
}
.italic {
  width: 44px;
  font-family: "Liberation Serif", serif;
  font-style: italic;
  font-size: 30px;
}
.underline {
  text-decoration: underline;
  text-decoration-thickness: 1px;
  text-underline-offset: 5px;
}
.font .second .caret {
  margin-left: 7px;
}
.bar {
  flex: none;
  width: 1px;
  height: 22px;
  background: #d2d2d2;
}
.font .second .bar {
  margin: 0 8px;
}
.font-color {
  margin-left: 5px;
}
.align-grid {
  width: 212px;
  height: 112px;
  padding: 6px 0 0 5px;
  margin-top: 12px;
  border-right: 2px solid #e3e3e3;
}
.square {
  justify-content: center;
  width: 38px;
  height: 40px;
}
.pressed {
  background: #c5c5c5;
}
.align-grid .bar {
  margin: 0 11px 0 4px;
}
.indent {
  width: 28px;
  margin-right: 5px;
}
.orient {
  gap: 5px;
}
.wrap-list {
  display: flex;
  flex-direction: column;
  gap: 27px;
  padding: 26px 0 0 10px;
}
.wrap-list .plain {
  gap: 4px;
  height: 30px;
}
.wrap-list span {
  padding-top: 2px;
}
.wrap-list .caret {
  margin-left: 7px;
}
.symbol {
  font-size: 31px;
  color: #666;
}
.dollar {
  margin: 0 13px 0 9px;
}
.percent {
  margin: 0 8px 0 9px;
}
.number .bar {
  margin: 0 10px 0 17px;
}
.decimals + .decimals {
  margin-left: 10px;
}
.conditional {
  width: 148px;
}
.as-table {
  width: 104px;
}
.cell-styles {
  width: 86px;
}
.conditional svg {
  align-self: flex-end;
  margin-right: 41px;
}
.insert {
  width: 82px;
}
.delete {
  width: 70px;
}
.format-cells {
  width: 86px;
}
.cells .big,
.editing .big {
  font-size: 22px;
}
.edit-list {
  display: flex;
  flex-direction: column;
  gap: 7px;
  width: 166px;
  padding: 7px 0 0 9px;
}
.edit-list .plain {
  gap: 6px;
  height: 32px;
}
.edit-list .caret {
  margin-left: 3px;
}
.autosum .caret {
  margin-left: 6px;
}
.sort {
  width: 77px;
}
.find {
  width: 86px;
}
.collapse {
  align-self: flex-end;
  margin: 0 13px 10px auto;
}

/* Formula bar */
.formula-bar {
  display: flex;
  flex: none;
  height: 84px;
  padding: 20px 10px;
}
.name-box,
.formula-tools,
.formula-field {
  display: flex;
  align-items: center;
  height: 44px;
  border: 1px solid #c6c6c6;
  background: #fdfdfd;
}
.formula-bar input {
  flex: 1;
  min-width: 0;
  padding: 2px 6px 0;
  border: 0;
  outline: 0;
  background: none;
  color: #444;
}
.name-box {
  width: 203px;
  padding-right: 11px;
}
.grip {
  display: flex;
  flex-direction: column;
  align-items: center;
  justify-content: center;
  gap: 4px;
  width: 59px;
}
.grip i {
  width: 4px;
  height: 4px;
  background: #b0b0b0;
}
.formula-tools {
  justify-content: space-between;
  width: 218px;
  padding: 0 24px;
}
.fx {
  font: italic 32px/32px "Liberation Serif", serif;
  color: #666;
}
.formula-field {
  flex: 1;
  margin-left: 6px;
  padding-right: 7px;
}

/* Sheet */
.sheet-area {
  display: flex;
  flex: 1;
  min-height: 0;
}
.sheet {
  flex: 1;
  min-width: 0;
  overflow: hidden;
  border-right: 1px solid #999;
}
table {
  width: 2205px;
  table-layout: fixed;
  border-collapse: separate;
  border-spacing: 0;
  font-size: 25px;
}
.row-head-col {
  width: 54px;
}
.col {
  width: 136px;
}
.wide-col {
  width: 247px;
}
th,
td {
  height: 38px;
  padding: 0 4px;
  line-height: 32px;
  white-space: nowrap;
}
th {
  font-weight: 400;
  text-align: center;
  background: #e6e6e6;
}
thead th,
.corner {
  border-right: 1px solid #bbb;
  border-bottom: 1px solid #999;
}
tbody th {
  border-right: 1px solid #999;
  border-bottom: 1px solid #b5b5b5;
}
.corner {
  padding: 0 3px 0 20px;
  background: #e6e6e6;
}
th.active {
  color: #1f643d;
  background: #d2d2d2;
}
tbody th.active {
  border-right: 2px solid #227447;
}
tbody td {
  position: relative;
  border-right: 1px solid #d4d4d4;
  border-bottom: 1px solid #d4d4d4;
  background: #fff;
}
.selection {
  position: absolute;
  z-index: 1;
  inset: -3px;
  border: 3px solid #227447;
}
.selection i {
  position: absolute;
  right: -5px;
  bottom: -5px;
  width: 9px;
  height: 9px;
  border: 1px solid #fff;
  background: #227447;
}
.sheet-scroll {
  display: flex;
  flex-direction: column;
  width: 38px;
  padding: 1px 3px 0 2px;
}
.scroll-up {
  display: flex;
  align-items: center;
  justify-content: center;
  height: 33px;
  border: 1px solid #ababab;
  background: #fff;
}
.sheet-thumb {
  flex: 1;
  border: 1px solid #ababab;
  border-bottom: 0;
  background: #fff;
}

/* Annotation arrows */
.arrows {
  position: absolute;
  left: 0;
  top: 0;
  width: 100%;
  height: 100%;
  pointer-events: none;
  filter: drop-shadow(2px 4px 3px rgba(0, 0, 0, 0.45));
}
</style>
